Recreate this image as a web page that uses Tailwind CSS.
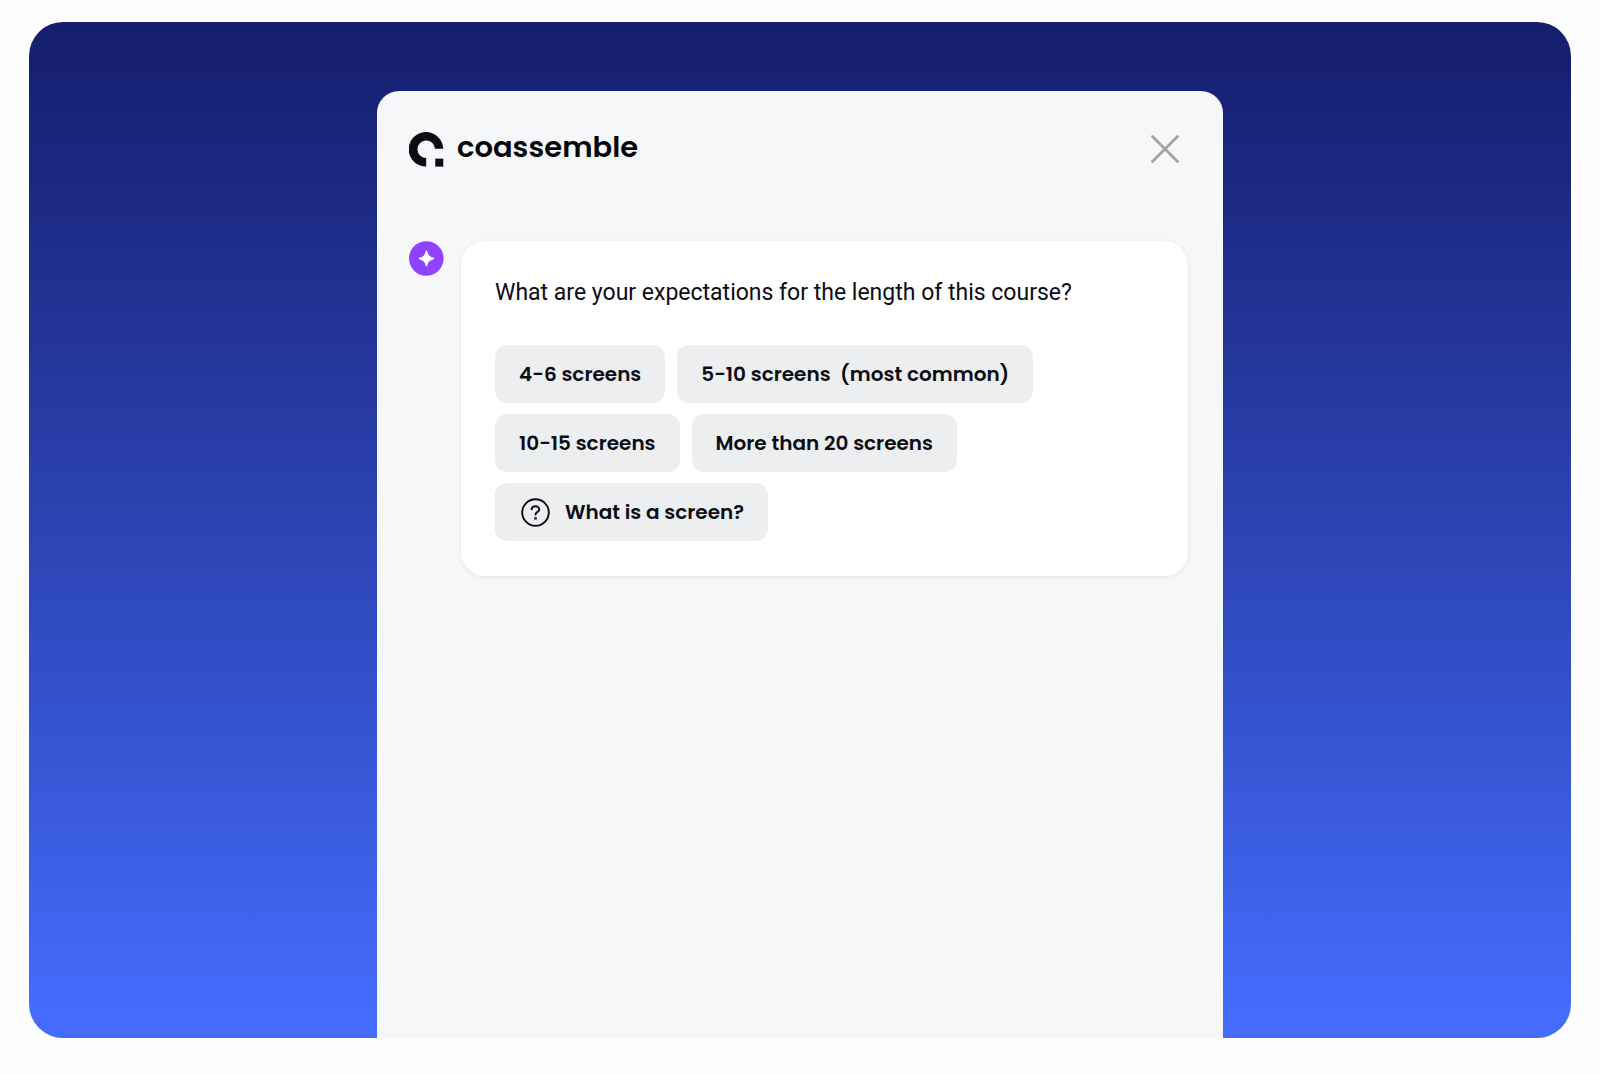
<!DOCTYPE html>
<html lang="en">

<head>
    <meta charset="utf-8">
    <meta name="viewport" content="width=device-width, initial-scale=1">
    <title>Coassemble</title>
    <script src="https://cdn.jsdelivr.net/npm/@tailwindcss/browser@4"></script>
</head>

<body class="flex min-h-screen flex-col bg-[#fefefe] px-[29px] pt-[22px] pb-9 text-[#0b0c14]">
    <div class="flex flex-1 justify-center rounded-[34px] bg-linear-to-b from-[#151d6d] to-[#446bfb] to-97% pt-[69px]">
        <main class="w-full max-w-[846px] rounded-t-[22px] bg-[#f5f7f9] px-8 pt-10">
            <header class="flex items-center justify-between pr-3">
                <a href="#" class="flex items-center gap-[13px] text-[#05060c]">
                    <svg class="size-[35px]" viewBox="0 0 35 35" fill="#0b0d12" aria-hidden="true">
                        <path d="M17.2 34.6A17.3 17.3 0 1 1 34.3 16.7H26A8.8 8.8 0 1 0 17.2 26z" />
                        <path d="M26.3 26.6H34.3V34.6H26.3z" />
                    </svg>
                    <span class="pb-1 font-[Poppins,sans-serif] text-[29px] leading-8 font-semibold">coassemble</span>
                </a>
                <button type="button" aria-label="Close">
                    <svg class="size-[28px]" viewBox="0 0 28 28" fill="none" stroke="#a1a3a6" stroke-width="2.8" stroke-linecap="round">
                        <path d="M1.5 1.5l25 25M26.5 1.5l-25 25" />
                    </svg>
                </button>
            </header>

            <section class="mt-[74px] flex items-start gap-[17px] pr-[3px]">
                <svg class="size-[35px] shrink-0" viewBox="0 0 35 35" aria-hidden="true">
                    <circle cx="17.3" cy="17.5" r="17.3" fill="#9043ff" />
                    <path d="M17.5 9.6Q18.1 9.6 18.4 10.8C19.6 14.6 20.4 15.4 24.2 16.6Q25.4 16.9 25.4 17.5Q25.4 18.1 24.2 18.4C20.4 19.6 19.6 20.4 18.4 24.2Q18.1 25.4 17.5 25.4Q16.9 25.4 16.6 24.2C15.4 20.4 14.6 19.6 10.8 18.4Q9.6 18.1 9.6 17.5Q9.6 16.9 10.8 16.6C14.6 15.4 15.4 14.6 16.6 10.8Q16.9 9.6 17.5 9.6z" fill="#fff" />
                </svg>
                <div class="flex-1 rounded-3xl bg-white px-[34px] py-[35px] shadow-[0_1px_5px_rgba(20,25,40,0.08)]">
                    <p class="font-[Roboto,sans-serif] text-[23px] leading-[34px]">What are your expectations for the length of this course?</p>
                    <div class="mt-[35px] flex flex-wrap gap-x-3 gap-y-[11px] font-[Poppins,sans-serif] text-[20px] leading-[26px] font-semibold">
                        <button type="button" class="rounded-xl bg-[#edeef0] px-6 py-4">4-6 screens</button>
                        <button type="button" class="rounded-xl bg-[#edeef0] px-6 py-4">5-10 screens&nbsp; (most common)</button>
                        <button type="button" class="rounded-xl bg-[#edeef0] px-6 py-4">10-15 screens</button>
                        <button type="button" class="rounded-xl bg-[#edeef0] px-6 py-4">More than 20 screens</button>
                        <button type="button" class="flex items-center gap-[14px] rounded-xl bg-[#edeef0] px-6 py-4">
                            <svg class="-my-1 size-8" viewBox="-2 -2 32 32" fill="none" stroke="#0b0c14" stroke-width="1.9" stroke-linecap="round" stroke-linejoin="round" aria-hidden="true">
                                <circle cx="14.5" cy="14.5" r="13.3" />
                                <path d="M10.6 11.4C10.8 9.5 12.3 8.3 14.4 8.3S18.3 9.6 18.3 11.5C18.3 14 14.5 13.8 14.5 16.6" />
                                <circle cx="14.5" cy="20.4" r="0.5" />
                            </svg>
                            What is a screen?
                        </button>
                    </div>
                </div>
            </section>
        </main>
    </div>
</body>

</html>
